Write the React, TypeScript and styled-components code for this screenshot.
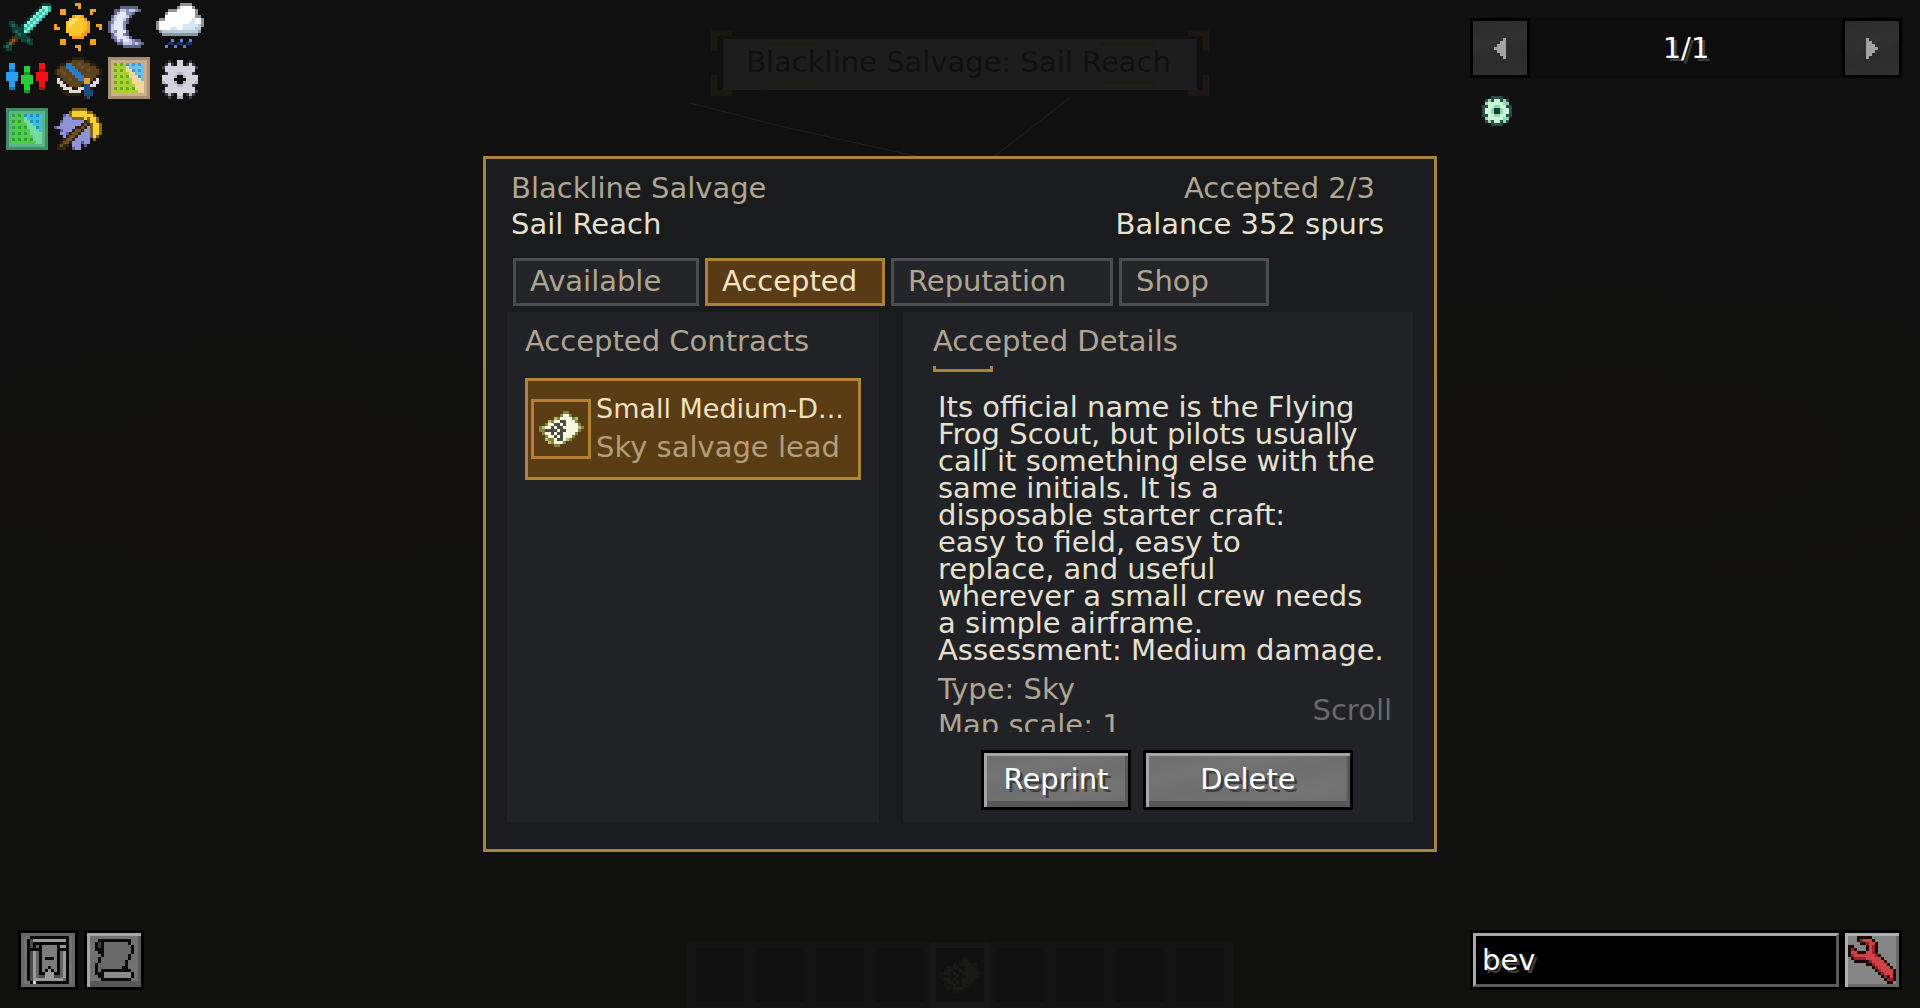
import React, { useState } from "react";
import styled, { createGlobalStyle } from "styled-components";

const GlobalStyle = createGlobalStyle`
  *, *::before, *::after { box-sizing: border-box; }
  body {
    margin: 0;
    background: #101010;
    color: #e6e0d1;
    font-family: "DejaVu Sans", sans-serif;
    font-size: 29px;
    line-height: 36px;
  }
  button, input {
    font: inherit;
    color: inherit;
    margin: 0;
    padding: 0;
    border-radius: 0;
  }
  button { cursor: pointer; }
  h1, h2, p { margin: 0; font: inherit; }
`;

/* ---------- pixel art ---------- */

type Palette = Record<string, string>;

const PixelSvg = styled.svg`
  display: block;
  flex: none;
`;

function Sprite({ rows, palette, unit = 3 }: { rows: string[]; palette: Palette; unit?: number }) {
  const width = Math.max(...rows.map((row) => row.length));
  const cells: React.ReactNode[] = [];
  rows.forEach((row, y) => {
    let x = 0;
    while (x < row.length) {
      let end = x + 1;
      while (end < row.length && row[end] === row[x]) end += 1;
      const fill = palette[row[x]];
      if (fill) cells.push(<rect key={`${x}-${y}`} x={x} y={y} width={end - x} height={1} fill={fill} />);
      x = end;
    }
  });
  return (
    <PixelSvg
      aria-hidden="true"
      width={width * unit}
      height={rows.length * unit}
      viewBox={`0 0 ${width} ${rows.length}`}
      shapeRendering="crispEdges"
    >
      {cells}
    </PixelSvg>
  );
}

const sword = {
  palette: { d: "#0d4238", D: "#082820", l: "#8df0da", c: "#2cc9ae", m: "#1c6a59", b: "#4a3212", w: "#8a5f22" },
  rows: [
    ".............ddd",
    "............dllc",
    "...........dlclc",
    "..........dlclc.",
    ".........dlclc..",
    "........dlclc...",
    "..dd...dlclc....",
    "..dmd.dlclc.....",
    "...ddddclc......",
    "...dmddlc.......",
    "....dmdd........",
    "...bbdddd.......",
    "..bwb.ddmd......",
    ".dwb....dd......",
    "dmd.............",
    ".dd.............",
  ],
};

const sun = {
  palette: { o: "#f29a1f", y: "#ffc62c", l: "#ffe377", r: "#f7a024" },
  rows: [
    ".......rr.......",
    "........r.......",
    "..rr........rr..",
    "..rr........r...",
    "......oyyo......",
    ".....yllyyo.....",
    "....yllyyyyo....",
    "r...ylyyyyyo..rr",
    "rr..yyyyyyyo...r",
    "....yyyyyyoo....",
    ".....yyyyoo.....",
    "......oooo......",
    "..rr........rr..",
    "..rr........rr..",
    ".......rr.......",
    "........r.......",
  ],
};

const moon = {
  palette: { o: "#5c6384", w: "#e6e9fa", l: "#c2c7e6", d: "#868db2" },
  rows: [
    "................",
    ".....oooooo.....",
    "...oolldlldo....",
    "...olwwddo......",
    "..olwwwlo.......",
    "..dlwwlo........",
    ".odwwwdo........",
    ".olwwwd.........",
    ".olwwwd.........",
    ".oldwwwo........",
    "..olwwdo........",
    "..odwwwlo.......",
    "...oldwwldoo....",
    "....oollldldo...",
    "......oooooo....",
    "................",
  ],
};

const cloud = {
  palette: { o: "#8d959b", w: "#ffffff", l: "#d5e6f3", m: "#b2cbdd", b: "#1c3170", B: "#5c86d6" },
  rows: [
    "........oooo....",
    ".......owwwwo...",
    "....ooowwwwwwo..",
    "...owwwwwwwwwo..",
    "...wwwwwwwwwwoo.",
    ".oowwwwwwwwwlwwo",
    "owwwwwwwwwwllwwo",
    "owwwwwwwwlllllmo",
    "owwwwllwwllllmm.",
    ".ommmmmmmmmmmmo.",
    "..oooooooooooo..",
    "................",
    ".....B..B..B....",
    "....bb.bb.bb....",
    "...B..B..B......",
    "................",
  ],
};

const people = {
  palette: { b: "#25a0f4", B: "#1577bd", g: "#22cf38", G: "#15982a", r: "#f01018", R: "#b00c12" },
  rows: [
    "................",
    "................",
    "................",
    "..bb........rr..",
    "..bb...gg...rr..",
    "..BB...gg...RR..",
    ".bbbb..GG..rrrr.",
    ".bbbb.gggg.rrrr.",
    ".bbbb.gggg.rrrr.",
    "..bb..gggg..rr..",
    "..bb...gg...rr..",
    "..BB...gg...RR..",
    ".......GG.......",
    "................",
    "................",
    "................",
  ],
};

const book = {
  palette: { d: "#2c1f10", b: "#5b431f", m: "#6b4f25", u: "#2b7cc4", U: "#1d4c85", w: "#dadada", g: "#8b8a87", y: "#e3a42a" },
  rows: [
    "................",
    "......dddd......",
    "....ddbbbbdd....",
    "..dduubbmbbbdd..",
    ".dbbuuubbmbbbbd.",
    "dbmbbuuubbbmbbbd",
    "dbbmbbuuubbbbbbd",
    ".dbbbbbuuubbbbd.",
    ".wdbbmbbuuyybdwd",
    ".wwdbbbbbbyydww.",
    "..wwdbbbbdUUww..",
    "..dwwwddwwUUd...",
    "...ddwwww.UUU...",
    "....ddddd.UUU...",
    "..........dU....",
    "................",
  ],
};

const gear = {
  palette: { o: "#3d3e45", l: "#d3d4e0", m: "#b4b6c6" },
  rows: [
    "................",
    "................",
    "....o..ll..o....",
    "...olo.ll.olo...",
    "..ollllllllllo..",
    "...llllllllll...",
    "...olllmmlllo...",
    "..llllm..mllll..",
    "..llll....llll..",
    "..mlllm..mlllm..",
    "...olllmmlllo...",
    "...llllllllll...",
    "..ollllllllllo..",
    "...omo.ll.omo...",
    "....o..mm..o....",
    "................",
  ],
};

const pickaxe = {
  palette: { p: "#9094d6", P: "#5a5d90", y: "#f5d03b", Y: "#8a6510", b: "#33240e", B: "#6d4f22" },
  rows: [
    "................",
    "......YYYYY.....",
    ".....YyyyyyYY...",
    "...PpYyyyyyyyY..",
    "...pppPYYYyYyyY.",
    "..PpppppppbByyY.",
    "..pppppppbBbYyyY",
    "PppppppbbBbpYyyY",
    "..PpppbBBbppYyyY",
    "..ppPbBBbpppYyyY",
    "...pbBBbppppPyY.",
    "...bBBbppppp.Y..",
    "..bBBbpppPpp....",
    ".bBbb.ppp.P.....",
    ".bbb..Ppp.......",
    "................",
  ],
};

const tealGear = {
  palette: { d: "#2a4d48", m: "#8ed9ae", l: "#cdf9d6", k: "#123f3c" },
  rows: [
    "...dddd...",
    ".dmdlldmd.",
    ".mlllllmm.",
    "ddllmmlldd",
    "dllmkkmlld",
    "dllmkkmlld",
    "ddllmmlldd",
    ".mlllllmm.",
    ".dmdlldmd.",
    "...dddd...",
  ],
};

const chart = {
  palette: { g: "#7f863c", o: "#b9be76", w: "#f6f8e0", k: "#4a4b42" },
  rows: [
    "........gg.....",
    ".......gwwg....",
    ".....ogwwwwgo..",
    "...ogwwkkwwwg..",
    "..gwwkkwkwwwwg.",
    "gowwkwkkwwwwwog",
    "ggkkkkwkkwwwwg.",
    ".gwwkwkkwwwwg..",
    "..gwwkwkwwwg...",
    "..oggwkkwog....",
    "...ogwwwg......",
    ".....gg........",
  ],
};

const questBook = {
  palette: { k: "#0a0a0a", l: "#9b9b9b", g: "#7c7c7c", d: "#4c4c4c", m: "#646464", w: "#dadada" },
  rows: [
    ".kkkkkkkkkkkkk",
    "kdlllllllllllk",
    "kdkkkkkkkkkkkk",
    "kdkmkgggggkllk",
    "kkkkkgggggkkkk",
    "kdlmkgggggkmlk",
    "kdlmkgggggkmlk",
    "kdlmkgkkkgkmlk",
    "kdlmkgggggkmlk",
    "kdlmkgggggkmlk",
    "kdlmkggkggkmlk",
    "kdlmkgklkgkmlk",
    "kdlmkklllkkmlk",
    "kdlmddlllddmlk",
    "kdllllllllllmk",
    ".kwkkkkkkkkkkk",
  ],
};

const scroll = {
  palette: { k: "#0a0a0a", l: "#8b8b8b", g: "#6a6a6a", d: "#3d3d3d" },
  rows: [
    ".kkkkkkkkkkk.",
    "kdkggggggggk.",
    "kdkgggggggggk",
    "kkkgggggggggk",
    ".kkgggggggggk",
    "..kggggggggk.",
    ".kgggggggggk.",
    ".kggggggggk..",
    "kgggggggggk..",
    "kggggggggkk..",
    "kgkkkkkkkkkk.",
    "kkklllllllllk",
    ".kklllllllllk",
    "..kkkkkkkkkk.",
  ],
};

const wrench = {
  palette: { k: "#1c0506", R: "#cf4348", r: "#962529" },
  rows: [
    "...kkkkk........",
    "...krRRRk.......",
    "....kkrRRk......",
    "kk....kRrk......",
    "krk...kRrk......",
    "kRRkkkRRrk......",
    "krRRRRRRRrk.....",
    ".krrrrRRRRRk....",
    "..kkkkkrRRRRk...",
    "......kkrRRRRk..",
    "........krRRRRk.",
    ".........krRRRRk",
    "..........krRRRk",
    "...........krkRk",
    "............krrk",
    ".............kk.",
  ],
};

const arrowLeft = ["...a", "..aa", ".aaa", "aaaa", ".aaa", "..aa", "...a"];
const arrowRight = ["a...", "aa..", "aaa.", "aaaa", "aaa.", "aa..", "a..."];
const arrowPalette = { a: "#a3a3a3" };

function mapRows(): string[] {
  const rows: string[] = ["................", ".ffffffffffffff.", ".feeeeeeeeeeeef."];
  for (let y = 0; y < 10; y += 1) {
    const land = 3 + Math.floor(y * 0.45);
    const water = y + 4;
    let row = ".fe";
    for (let x = 0; x < 10; x += 1) {
      const dotted = x % 2 === 0 && y % 2 === 0;
      if (x <= land) row += dotted ? "G" : "g";
      else if (x < water) row += "s";
      else row += dotted ? "U" : "u";
    }
    rows.push(`${row}ef.`);
  }
  rows.push(".feeeeeeeeeeeef.", ".ffffffffffffff.", "................");
  return rows;
}

const mapTiles = mapRows();
const worldMap = {
  rows: mapTiles,
  palette: { f: "#a98b6d", e: "#c9b08c", g: "#a6d32f", G: "#74a41e", s: "#f0d79b", u: "#6cc2ee", U: "#3f97d4" },
};
const claimMap = {
  rows: mapTiles,
  palette: { f: "#428c64", e: "#5cb485", g: "#51cc4b", G: "#2fa03c", s: "#74dba6", u: "#3fbce2", U: "#2490c2" },
};

/* ---------- screen ---------- */

const Screen = styled.div`
  position: relative;
  min-height: 100vh;
  display: grid;
  grid-template-columns: minmax(0, 1fr) minmax(0, 2fr) minmax(0, 1fr);
  background:
    radial-gradient(ellipse at 84% 45%, #13120f 0%, transparent 24%),
    radial-gradient(ellipse at 14% 45%, #121110 0%, transparent 26%),
    linear-gradient(#101010, #111110);
`;

const Side = styled.div<{ $right?: boolean }>`
  position: relative;
  display: flex;
  flex-direction: column;
  justify-content: space-between;
  padding: ${(p) => (p.$right ? "18px 18px 18px 30px" : "3px 3px 18px 3px")};
`;

const Stage = styled.main`
  position: relative;
  display: flex;
  align-items: center;
  justify-content: center;
  padding: 0 3px;
`;

/* ---------- dimmed world behind the dialog ---------- */

const Backdrop = styled.div`
  position: absolute;
  inset: 0;
  display: flex;
  flex-direction: column;
  align-items: center;
  justify-content: space-between;
  padding-top: 30px;
  overflow: hidden;
`;

const Ropes = styled.svg`
  position: absolute;
  top: 96px;
  left: 50%;
  margin-left: -270px;
`;

const Banner = styled.div`
  position: relative;
  padding: 9px 12px 6px;
`;

const BannerPlate = styled.div`
  position: relative;
  padding: 5px 26px 10px 23px;
  background: #1d1d1d;
  color: #101010;
  white-space: nowrap;

  &::before, &::after {
    content: "";
    position: absolute;
    left: 43px;
    right: 43px;
    height: 3px;
    background: linear-gradient(90deg, #1e1d12 54px, transparent 54px calc(100% - 54px), #1e1b13 calc(100% - 54px));
  }
  &::before { top: 3px; }
  &::after { bottom: 6px; }
`;

const Corner = styled.span<{ $x: "left" | "right"; $y: "top" | "bottom" }>`
  position: absolute;
  width: 21px;
  height: 21px;
  ${(p) => p.$x}: 0;
  ${(p) => p.$y}: 0;
  border: 0 solid ${(p) => (p.$x === "left" ? "#1a1910" : "#1c1712")};
  border-${(p) => p.$x}-width: 6px;
  border-${(p) => p.$y}-width: 6px;
`;

const Hotbar = styled.div`
  display: flex;
  align-items: stretch;
  height: 66px;
  padding: 0 3px;
  background: #141414;
`;

const Slot = styled.div<{ $selected?: boolean }>`
  width: 60px;
  display: grid;
  place-items: center;
  background: #101010;
  border: 6px solid ${(p) => (p.$selected ? "#171717" : "#141414")};
`;

const Faded = styled.span`
  opacity: 0.04;
`;

/* ---------- utility buttons ---------- */

const Tray = styled.nav`
  display: grid;
  grid-template-columns: repeat(4, 48px);
  gap: 3px;
`;

const TrayButton = styled.button`
  width: 48px;
  height: 48px;
  border: 0;
  background: none;
`;

const CornerRow = styled.div`
  display: flex;
  gap: 6px;
  padding-left: 15px;
`;

const StoneButton = styled.button<{ $tone?: "pressed" | "dark" }>`
  min-width: 60px;
  height: 60px;
  display: flex;
  align-items: center;
  justify-content: center;
  flex: none;
  border: 3px solid #000;
  color: #fff;
  text-shadow: 3px 3px 0 #3e3e3e;
  background: ${(p) =>
    p.$tone === "dark"
      ? "linear-gradient(165deg, #2b2b2b, #313131 40%, #2c2c2c 60%, #303030)"
      : "linear-gradient(168deg, #6d6d6d, #737373 30%, #6e6e6e 50%, #747474 75%, #6c6c6c)"};
  box-shadow: ${(p) =>
    p.$tone === "dark"
      ? "none"
      : p.$tone === "pressed"
        ? "inset 0 0 0 3px #666"
        : "inset 3px 3px 0 #a6a6a6, inset -3px -6px 0 #585858"};
`;

const WrenchButton = styled(StoneButton)`
  background: #858585;
  box-shadow: inset 3px 3px 0 #b0b0b0, inset -3px -3px 0 #6a6a6a;
`;

const Pager = styled.div`
  display: flex;
  align-items: center;
  justify-content: space-between;
  background: #0c0c0c;
`;

const PageCount = styled.span`
  color: #fff;
  text-shadow: 3px 3px 0 #3e3e3e;
`;

const TopRight = styled.div`
  display: flex;
  flex-direction: column;
  gap: 18px;
`;

const ItemButton = styled.button`
  align-self: flex-start;
  margin-left: 12px;
  border: 0;
  background: none;
`;

const SearchRow = styled.form`
  display: flex;
`;

const SearchFrame = styled.label`
  flex: 1;
  min-width: 0;
  display: flex;
  border: 3px solid #000;
  background: #000;
`;

const SearchInput = styled.input`
  width: 100%;
  padding: 0 6px;
  border: 3px solid;
  border-color: #a9a9a9 #5c5c5c #5c5c5c #a9a9a9;
  outline: 0;
  background: #000;
  color: #fff;
  text-shadow: 3px 3px 0 #3e3e3e;
`;

/* ---------- dialog ---------- */

const Dialog = styled.section`
  width: 100%;
  max-width: 954px;
  padding: 11px 21px 27px;
  border: 3px solid #a78342;
  background: #191b1c;
`;

const Header = styled.header`
  display: flex;
  justify-content: space-between;
  padding: 0 29px 0 4px;
  margin-bottom: 16px;
`;

const HeaderSide = styled.div<{ $end?: boolean }>`
  text-align: ${(p) => (p.$end ? "right" : "left")};
`;

const Muted = styled.p<{ $inset?: boolean }>`
  color: #b0a592;
  padding-right: ${(p) => (p.$inset ? "9px" : "0")};
`;

const Tabs = styled.div`
  display: flex;
  gap: 6px;
  padding-left: 6px;
  margin-bottom: 6px;
`;

const Tab = styled.button<{ $active: boolean; $width: number }>`
  width: ${(p) => p.$width}px;
  height: 48px;
  padding: 0 0 3px 14px;
  text-align: left;
  border: 3px solid ${(p) => (p.$active ? "#a98339" : "#4b4c4f")};
  background: ${(p) => (p.$active ? "#593b15" : "#242529")};
  color: ${(p) => (p.$active ? "#f3e3c2" : "#b0a592")};
`;

const Panels = styled.div`
  display: grid;
  grid-template-columns: minmax(0, 372fr) minmax(0, 510fr);
  gap: 24px;
`;

const Panel = styled.div<{ $details?: boolean }>`
  display: flex;
  flex-direction: column;
  padding: ${(p) => (p.$details ? "11px 21px 12px 30px" : "11px 18px 12px")};
  background: #212226;
`;

const PanelTitle = styled.h2`
  color: #b0a592;
`;

const Contract = styled.button`
  display: flex;
  align-items: center;
  gap: 5px;
  height: 102px;
  margin-top: 19px;
  padding: 0 0 0 3px;
  border: 3px solid #ae853b;
  background: #5a3c15;
  text-align: left;
  white-space: nowrap;
`;

const ContractIcon = styled.span`
  width: 60px;
  height: 60px;
  display: grid;
  place-items: center;
  flex: none;
  border: 3px solid #b47f33;
`;

const ContractText = styled.span`
  display: grid;
  line-height: 39px;
  padding-bottom: 3px;
`;

const ContractName = styled.span`
  color: #f1e1c0;
  font-size: 27px;
`;

const ContractKind = styled.span`
  color: #b39d7b;
`;

const Bracket = styled.div`
  width: 60px;
  height: 6px;
  margin-top: 7px;
  border: 3px solid #a98339;
  border-top: 0;
`;

const Viewport = styled.div`
  position: relative;
  height: 360px;
  overflow: hidden;
  padding: 22px 0 0 5px;
`;

const Description = styled.p`
  line-height: 27px;
  margin-bottom: 7px;
  white-space: nowrap;
`;

const ScrollHint = styled.span`
  position: absolute;
  right: 0;
  bottom: 4px;
  color: #6b6866;
`;

const Actions = styled.div`
  display: flex;
  justify-content: flex-end;
  gap: 12px;
  margin-top: 18px;
  padding-right: 39px;
`;

const Action = styled(StoneButton)<{ $width: number }>`
  width: ${(p) => p.$width}px;
  padding-bottom: 3px;
`;

const tabs = [
  { name: "Available", width: 186 },
  { name: "Accepted", width: 180 },
  { name: "Reputation", width: 222 },
  { name: "Shop", width: 150 },
];

const tray = [
  { name: "Survival", art: sword },
  { name: "Day", art: sun },
  { name: "Night", art: moon },
  { name: "Weather", art: cloud },
  { name: "Team", art: people },
  { name: "Guide", art: book },
  { name: "World map", art: worldMap },
  { name: "Settings", art: gear },
  { name: "Claims", art: claimMap },
  { name: "Tools", art: pickaxe },
];

const description = [
  "Its official name is the Flying",
  "Frog Scout, but pilots usually",
  "call it something else with the",
  "same initials. It is a",
  "disposable starter craft:",
  "easy to field, easy to",
  "replace, and useful",
  "wherever a small crew needs",
  "a simple airframe.",
  "Assessment: Medium damage.",
];

export default function App() {
  const [active, setActive] = useState("Accepted");
  const [query, setQuery] = useState("bev");

  return (
    <>
      <GlobalStyle />
      <Screen>
        <Backdrop>
          <Ropes width="540" height="60" viewBox="0 0 540 60" fill="none" stroke="#212121" aria-hidden="true">
            <path d="M0 7 L90 30 L230 61" />
            <path d="M381 1 L305 60" />
          </Ropes>
          <Banner>
            <Corner $x="left" $y="top" />
            <Corner $x="right" $y="top" />
            <Corner $x="left" $y="bottom" />
            <Corner $x="right" $y="bottom" />
            <BannerPlate>Blackline Salvage: Sail Reach</BannerPlate>
          </Banner>
          <Hotbar>
            {Array.from({ length: 9 }, (_, i) => (
              <Slot key={i} $selected={i === 4}>
                {i === 4 && (
                  <Faded>
                    <Sprite {...chart} />
                  </Faded>
                )}
              </Slot>
            ))}
          </Hotbar>
        </Backdrop>

        <Side>
          <Tray aria-label="Shortcuts">
            {tray.map((item) => (
              <TrayButton key={item.name} type="button" aria-label={item.name}>
                <Sprite {...item.art} />
              </TrayButton>
            ))}
          </Tray>
          <CornerRow>
            <StoneButton type="button" $tone="pressed" aria-label="Bookmarks">
              <Sprite {...questBook} />
            </StoneButton>
            <StoneButton type="button" aria-label="History">
              <Sprite {...scroll} />
            </StoneButton>
          </CornerRow>
        </Side>

        <Stage>
          <Dialog aria-label="Contracts">
            <Header>
              <HeaderSide>
                <Muted>Blackline Salvage</Muted>
                <h1>Sail Reach</h1>
              </HeaderSide>
              <HeaderSide $end>
                <Muted $inset>Accepted 2/3</Muted>
                <p>Balance 352 spurs</p>
              </HeaderSide>
            </Header>
            <Tabs role="tablist">
              {tabs.map((tab) => (
                <Tab
                  key={tab.name}
                  type="button"
                  role="tab"
                  aria-selected={active === tab.name}
                  $active={active === tab.name}
                  $width={tab.width}
                  onClick={() => setActive(tab.name)}
                >
                  {tab.name}
                </Tab>
              ))}
            </Tabs>
            <Panels>
              <Panel>
                <PanelTitle>Accepted Contracts</PanelTitle>
                <Contract type="button">
                  <ContractIcon>
                    <Sprite {...chart} />
                  </ContractIcon>
                  <ContractText>
                    <ContractName>Small Medium-D...</ContractName>
                    <ContractKind>Sky salvage lead</ContractKind>
                  </ContractText>
                </Contract>
              </Panel>
              <Panel $details>
                <PanelTitle>Accepted Details</PanelTitle>
                <Bracket />
                <Viewport>
                  <Description>
                    {description.map((line) => (
                      <React.Fragment key={line}>
                        {line}
                        <br />
                      </React.Fragment>
                    ))}
                  </Description>
                  <Muted>Type: Sky</Muted>
                  <Muted>Map scale: 1</Muted>
                  <ScrollHint>Scroll</ScrollHint>
                </Viewport>
                <Actions>
                  <Action type="button" $width={150}>
                    Reprint
                  </Action>
                  <Action type="button" $width={210}>
                    Delete
                  </Action>
                </Actions>
              </Panel>
            </Panels>
          </Dialog>
        </Stage>

        <Side $right>
          <TopRight>
            <Pager>
              <StoneButton type="button" $tone="dark" aria-label="Previous page">
                <Sprite rows={arrowLeft} palette={arrowPalette} />
              </StoneButton>
              <PageCount>1/1</PageCount>
              <StoneButton type="button" $tone="dark" aria-label="Next page">
                <Sprite rows={arrowRight} palette={arrowPalette} />
              </StoneButton>
            </Pager>
            <ItemButton type="button" aria-label="Item">
              <Sprite {...tealGear} />
            </ItemButton>
          </TopRight>
          <SearchRow onSubmit={(e) => e.preventDefault()}>
            <SearchFrame>
              <SearchInput
                type="text"
                aria-label="Search items"
                value={query}
                onChange={(e) => setQuery(e.target.value)}
              />
            </SearchFrame>
            <WrenchButton type="button" aria-label="Configure">
              <Sprite {...wrench} />
            </WrenchButton>
          </SearchRow>
        </Side>
      </Screen>
    </>
  );
}
